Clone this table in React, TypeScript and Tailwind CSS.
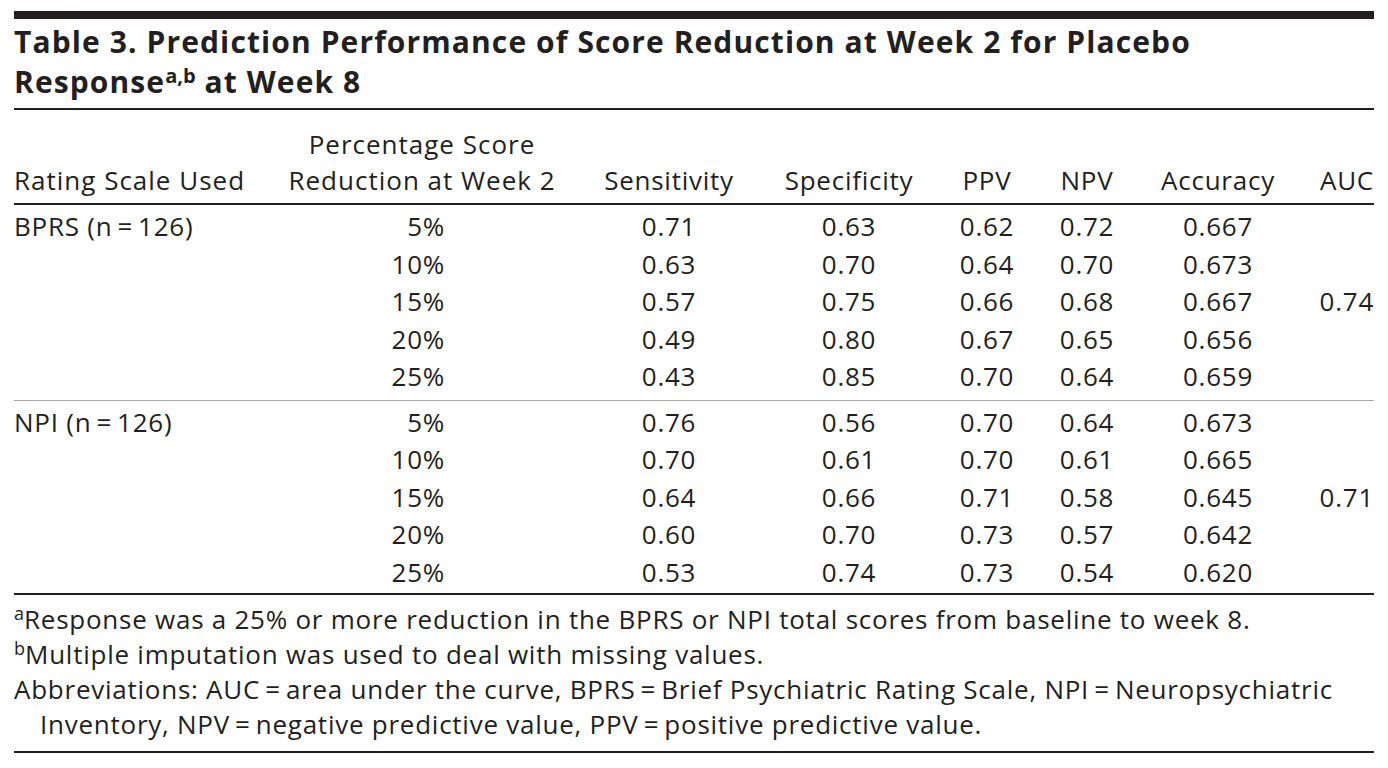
const cols =
  "grid grid-cols-[250px_316px_178px_182px_94px_106px_156px_78px]";

type Row = [string, string, string, string, string, string];

const groups: { label: string; auc: string; rows: Row[] }[] = [
  {
    label: "BPRS (n\u2009=\u2009126)",
    auc: "0.74",
    rows: [
      ["5%", "0.71", "0.63", "0.62", "0.72", "0.667"],
      ["10%", "0.63", "0.70", "0.64", "0.70", "0.673"],
      ["15%", "0.57", "0.75", "0.66", "0.68", "0.667"],
      ["20%", "0.49", "0.80", "0.67", "0.65", "0.656"],
      ["25%", "0.43", "0.85", "0.70", "0.64", "0.659"],
    ],
  },
  {
    label: "NPI (n\u2009=\u2009126)",
    auc: "0.71",
    rows: [
      ["5%", "0.76", "0.56", "0.70", "0.64", "0.673"],
      ["10%", "0.70", "0.61", "0.70", "0.61", "0.665"],
      ["15%", "0.64", "0.66", "0.71", "0.58", "0.645"],
      ["20%", "0.60", "0.70", "0.73", "0.57", "0.642"],
      ["25%", "0.53", "0.74", "0.73", "0.54", "0.620"],
    ],
  },
];

const eq = "\u2009=\u2009";

export default function App() {
  return (
    <div className="min-h-[768px] w-[1388px] bg-white font-['Open_Sans',sans-serif] text-[26px] tracking-[0.75px] text-[#231f20]">
      <div className="mx-[14px] w-[1360px] pt-[11px]">
        <div className="h-[8px] bg-[#231f20]" />

        {/* title */}
        <h1 className="mt-[3px] text-[30px] font-bold leading-[40px] tracking-[1.1px]">
          Table 3. Prediction Performance of Score Reduction at Week 2 for Placebo
          <br />
          Response
          <sup className="text-[20px] font-bold tracking-[0px]">a,b</sup> at Week 8
        </h1>
        <div className="mt-[6px] h-[2px] bg-[#231f20]" />

        {/* header */}
        <div className={`${cols} border-b-2 border-[#231f20] pt-[16px] pb-[5px] leading-[36px]`}>
          <div className="self-end tracking-[1px]">Rating Scale Used</div>
          <div className="self-end text-center tracking-[1px]">
            Percentage Score
            <br />
            Reduction at Week 2
          </div>
          <div className="self-end text-center">Sensitivity</div>
          <div className="self-end text-center">Specificity</div>
          <div className="self-end text-center">PPV</div>
          <div className="self-end text-center">NPV</div>
          <div className="self-end text-center">Accuracy</div>
          <div className="self-end text-right">AUC</div>
        </div>

        {/* body */}
        {groups.map((g, gi) => (
          <div
            key={g.label}
            className={
              gi === 0
                ? "border-b border-[#a7a9ac] pt-[3px] pb-[4px]"
                : "border-b-2 border-[#231f20] pt-[3px] pb-[2px]"
            }
          >
            {g.rows.map((r, i) => (
              <div key={r[0]} className={`${cols} h-[37.5px] leading-[37.5px]`}>
                <div>{i === 0 ? g.label : ""}</div>
                <div className="pr-[135px] text-right">{r[0]}</div>
                <div className="text-center">{r[1]}</div>
                <div className="text-center">{r[2]}</div>
                <div className="text-center">{r[3]}</div>
                <div className="text-center">{r[4]}</div>
                <div className="text-center">{r[5]}</div>
                <div className="text-right">{i === 2 ? g.auc : ""}</div>
              </div>
            ))}
          </div>
        ))}

        {/* footnotes */}
        <div className="border-b-2 border-[#231f20] pt-[7px] pb-[9px] leading-[35px]">
          <p>
            <sup className="text-[18px] tracking-[0px]">a</sup>Response was a 25% or more
            reduction in the BPRS or NPI total scores from baseline to week 8.
          </p>
          <p>
            <sup className="text-[18px] tracking-[0px]">b</sup>Multiple imputation was used
            to deal with missing values.
          </p>
          <p className="pl-[26px] -indent-[26px]">
            Abbreviations: AUC{eq}area under the curve, BPRS{eq}Brief Psychiatric Rating
            Scale, NPI{eq}Neuropsychiatric
            <br />
            Inventory, NPV{eq}negative predictive value, PPV{eq}positive predictive value.
          </p>
        </div>
      </div>
    </div>
  );
}
